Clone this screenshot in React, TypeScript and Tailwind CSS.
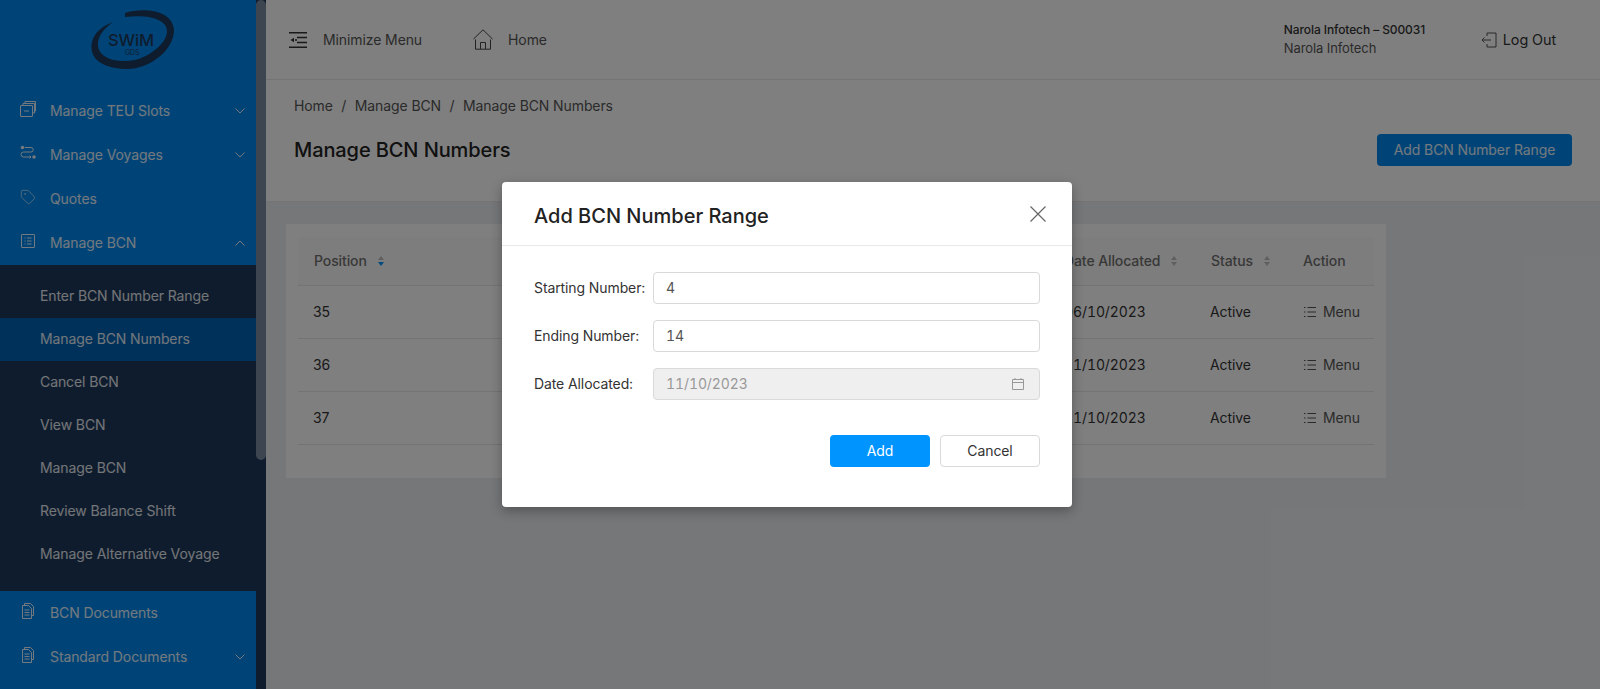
import type { ReactNode } from "react";
import { Tag } from "lucide-react";

function Icon({ children, className = "w-4 h-4" }: { children: ReactNode; className?: string }) {
  return (
    <svg viewBox="0 0 16 16" fill="none" stroke="currentColor" strokeWidth="1" className={className}>
      {children}
    </svg>
  );
}

const StackIcon = () => (
  <Icon>
    <rect x="0.5" y="4.5" width="12" height="11" rx="0.5" />
    <path d="M3 4V2.5h11.5V12H13M5 2V0.5h10.5V10H15M4 10h5" />
  </Icon>
);
const RouteIcon = () => (
  <Icon>
    <circle cx="2.5" cy="2.5" r="1.8" fill="currentColor" stroke="none" />
    <circle cx="14" cy="12" r="1.8" fill="currentColor" stroke="none" />
    <path d="M5 2.5h6a2.2 2.2 0 0 1 0 4.5H3.5a2.5 2.5 0 0 0 0 5H11M9.5 10.5 11 12l-1.5 1.5" />
  </Icon>
);
const ListBoxIcon = () => (
  <Icon>
    <rect x="1.5" y="1.5" width="13" height="13" rx="0.5" />
    <path d="M7 5h4.5M7 8h4.5M7 11h4.5M4.5 5h1M4.5 8h1M4.5 11h1" />
  </Icon>
);
const DocIcon = () => (
  <Icon>
    <path d="M4.5 2.5V.5h6l3 3v9h-2" />
    <path d="M2.5 2.5h6l3 3v10h-9zM4.5 7h5M4.5 9.5h5M4.5 12h5" />
  </Icon>
);

function Logo() {
  return (
    <svg viewBox="88 6 90 66" className="w-[90px] h-[66px] text-[#1c385c]">
      <path
        fill="currentColor"
        d="M125 13C140 8 172 8 174 30C174 50 150 69 127 69C105 69 88 60 92 42C94 33 102 26 113 22C102 30 97 38 98 46C100 60 120 63 135 60C150 56 166 44 167 32C168 20 150 14 125 17Z"
      />
      <text x="108" y="46" fontSize="16.5" fontWeight="500" fill="currentColor" fontFamily="Inter, sans-serif">
        SWiM
      </text>
      <text x="125" y="54.5" fontSize="7" fill="currentColor" fontFamily="Inter, sans-serif">
        GDS
      </text>
    </svg>
  );
}

function Chevron({ up }: { up?: boolean }) {
  return (
    <svg viewBox="0 0 10 6" fill="none" stroke="currentColor" className={`w-[10px] h-[6px] ${up ? "rotate-180" : ""}`}>
      <path d="M.5.5 5 5 9.5.5" />
    </svg>
  );
}

function MenuItem({ icon, label, open, chevron }: { icon: ReactNode; label: string; open?: boolean; chevron?: boolean }) {
  return (
    <div className="h-11 flex items-center pl-5 pr-[11px] text-white/90">
      <span className="w-[30px] -mt-1">{icon}</span>
      <span className="flex-1">{label}</span>
      {chevron && <Chevron up={open} />}
    </div>
  );
}

const subItems = [
  "Enter BCN Number Range",
  "Manage BCN Numbers",
  "Cancel BCN",
  "View BCN",
  "Manage BCN",
  "Review Balance Shift",
  "Manage Alternative Voyage",
];

function Sidebar() {
  return (
    <aside className="w-[266px] h-full flex shrink-0 bg-[#1c385c]">
      <div className="w-64 h-full bg-[#0088ee] text-sm overflow-hidden">
        <div className="h-[89px] flex justify-center pt-[6px] pl-[10px]">
          <Logo />
        </div>
        <MenuItem icon={<StackIcon />} label="Manage TEU Slots" chevron />
        <MenuItem icon={<RouteIcon />} label="Manage Voyages" chevron />
        <MenuItem icon={<Tag className="w-4 h-4" strokeWidth={1} />} label="Quotes" />
        <MenuItem icon={<ListBoxIcon />} label="Manage BCN" chevron open />
        <div className="bg-[#1c385c] pt-[10px] pb-[15px]">
          {subItems.map((item, i) => (
            <div
              key={item}
              className={`h-[43px] flex items-center pl-10 pb-[2px] text-white/90 ${i === 1 ? "bg-[#0062b4]" : ""}`}
            >
              {item}
            </div>
          ))}
        </div>
        <MenuItem icon={<DocIcon />} label="BCN Documents" />
        <MenuItem icon={<DocIcon />} label="Standard Documents" chevron />
      </div>
      <div className="w-[10px] h-[460px] rounded-[5px] bg-[#7a8ca0]" />
    </aside>
  );
}

function SortIcon({ active }: { active?: boolean }) {
  return (
    <svg viewBox="0 0 8 12" className="w-2 h-3 ml-[10px]">
      <path d="M4 1 7 5H1Z" fill="#bfbfbf" />
      <path d="M4 11 1 7h6Z" fill={active ? "#0094ff" : "#bfbfbf"} />
    </svg>
  );
}

const rows = [
  { pos: "35", date: "06/10/2023" },
  { pos: "36", date: "11/10/2023" },
  { pos: "37", date: "11/10/2023" },
];

function Table() {
  return (
    <div className="mx-3 mt-[13px] text-sm text-[#333]">
      <div className="h-[49px] flex items-center bg-[#fafafa] border-b border-[#e8e8e8] font-medium text-[#707070]">
        <div className="w-[747px] pl-4 flex items-center">
          Position
          <SortIcon active />
        </div>
        <div className="w-[165px] pl-[19px] flex items-center">
          Date Allocated
          <SortIcon />
        </div>
        <div className="w-[77px] pl-[1px] flex items-center">
          Status
          <SortIcon />
        </div>
        <div className="flex-1 pl-[16px]">Action</div>
      </div>
      {rows.map((r) => (
        <div key={r.pos} className="h-[53px] flex items-center border-b border-[#e8e8e8]">
          <div className="w-[747px] pl-[15px]">{r.pos}</div>
          <div className="w-[165px] pl-[19px] tabular-nums">{r.date}</div>
          <div className="w-[93px]">Active</div>
          <div className="flex-1 flex items-center gap-[6px] text-[#555]">
            <svg viewBox="0 0 14 14" fill="none" stroke="currentColor" className="w-[14px] h-[14px]">
              <path d="M4.5 2.5H13M4.5 7H13M4.5 11.5H13M1 2.5h1.5M1 7h1.5M1 11.5h1.5" />
            </svg>
            Menu
          </div>
        </div>
      ))}
    </div>
  );
}

function Header() {
  return (
    <header className="h-20 shrink-0 flex items-center bg-white border-b border-[#e8e8e8] pl-[23px] pr-11 text-sm text-[#555]">
      <svg viewBox="0 0 18 16" fill="none" stroke="currentColor" className="w-[18px] h-4 text-[#333]">
        <path d="M0 .7h18M0 15.3h18M8 5.5h10M8 10.5h10M6 8H8" strokeWidth="1.4" />
        <path d="M1.5 8 5 5.7v4.6Z" fill="currentColor" stroke="none" />
      </svg>
      <span className="ml-4">Minimize Menu</span>
      <svg viewBox="0 0 20 21" fill="none" stroke="currentColor" className="ml-[51px] w-5 h-[21px] text-[#444]">
        <path d="M.5 10 10 .8 19.5 10M2.5 10.5v9.7h15v-9.7M7.5 20v-6.5h5V20" />
      </svg>
      <span className="ml-[15px]">Home</span>
      <div className="ml-auto mb-[2px] text-[12px] leading-[19px] w-[197px]">
        <div className="font-medium text-[#333]">Narola Infotech – S00031</div>
        <div className="text-[13px]">Narola Infotech</div>
      </div>
      <svg viewBox="0 0 16 16" fill="none" stroke="currentColor" className="w-4 h-4 text-[#555]">
        <path d="M6 1h9v14H6M6 1v3M6 15v-3M1 8h9M3.5 5.5 1 8l2.5 2.5" />
      </svg>
      <span className="ml-[6px] pt-[2px] text-[14.4px] text-[#333]">Log Out</span>
    </header>
  );
}

function Field({ label, value, disabled }: { label: string; value: string; disabled?: boolean }) {
  return (
    <div className="flex items-center h-8">
      <label className="w-[119px] text-sm text-[#333]">{label}</label>
      <div
        className={`flex-1 h-8 flex items-center justify-between px-3 rounded border border-[#d9d9d9] text-sm tabular-nums ${
          disabled ? "bg-[#f0eff0] text-[#999]" : "bg-white text-[#555]"
        }`}
      >
        {value}
        {disabled && (
          <svg viewBox="0 0 14 14" fill="none" stroke="currentColor" className="w-[14px] h-[14px] mr-[2px] text-[#999]">
            <path d="M1.5 2.5h11v10h-11zM1.5 5.5h11M4 1v2M10 1v2" />
          </svg>
        )}
      </div>
    </div>
  );
}

function Modal() {
  return (
    <div className="absolute inset-0 bg-black/50">
      <div className="absolute left-[502px] top-[182px] w-[570px] h-[325px] bg-white rounded shadow-[0_4px_12px_rgba(0,0,0,0.3)]">
        <div className="h-[64px] flex items-center justify-between pl-8 pr-[26px] border-b border-[#e8e8e8]">
          <h2 className="pt-[5px] text-xl font-medium tracking-normal text-[#222]">Add BCN Number Range</h2>
          <svg viewBox="0 0 16 16" fill="none" stroke="currentColor" strokeWidth="1.2" className="w-4 h-4 text-[#666]">
            <path d="M.5.5l15 15M15.5.5l-15 15" />
          </svg>
        </div>
        <div className="px-8 pt-[26px] flex flex-col gap-4">
          <Field label="Starting Number:" value="4" />
          <Field label="Ending Number:" value="14" />
          <Field label="Date Allocated:" value="11/10/2023" disabled />
        </div>
        <div className="flex justify-end gap-[10px] px-8 mt-[35px] text-sm">
          <button className="w-[100px] h-8 rounded bg-[#0094ff] text-white">Add</button>
          <button className="w-[100px] h-8 rounded border border-[#d9d9d9] bg-white text-[#333]">Cancel</button>
        </div>
      </div>
    </div>
  );
}

export default function App() {
  return (
    <div className="relative h-screen flex overflow-hidden bg-[#eceff3] tracking-[-0.1px] font-['Inter',sans-serif]">
      <Sidebar />
      <main className="flex-1 flex flex-col min-w-0">
        <Header />
        <section className="h-[122px] shrink-0 bg-white px-[28px] border-b border-[#e8e8e8]">
          <div className="pt-4 text-sm text-[#555] flex gap-[8.5px]">
            <span>Home</span>
            <span>/</span>
            <span>Manage BCN</span>
            <span>/</span>
            <span>Manage BCN Numbers</span>
          </div>
          <div className="flex items-center justify-between mt-[18px]">
            <h1 className="text-xl font-medium text-[#222]">Manage BCN Numbers</h1>
            <button className="w-[195px] h-8 rounded bg-[#0088ee] text-white/90 text-sm">Add BCN Number Range</button>
          </div>
        </section>
        <div className="ml-5 mt-[22px] w-[1100px] h-[254px] bg-white overflow-hidden">
          <Table />
        </div>
      </main>
      <Modal />
    </div>
  );
}
